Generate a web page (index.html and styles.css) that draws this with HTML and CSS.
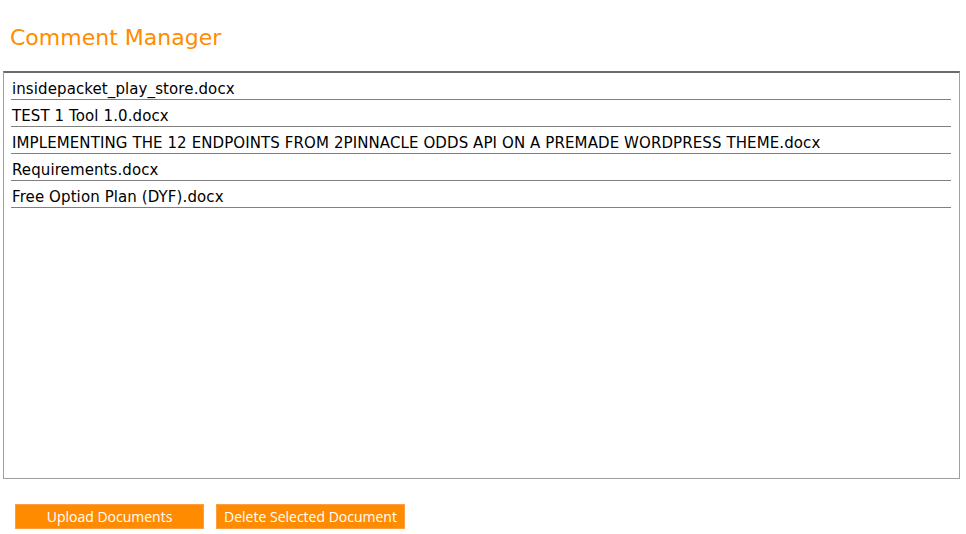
FILE: index.html
```html
<!DOCTYPE html>
<html>
<head>
<meta charset="utf-8">
<link rel="stylesheet" href="styles.css">
</head>
<body>
<h1 class="title">Comment Manager</h1>
<div class="doc-list">
  <div class="doc-row">insidepacket_play_store.docx</div>
  <div class="doc-row">TEST 1 Tool 1.0.docx</div>
  <div class="doc-row">IMPLEMENTING THE 12 ENDPOINTS FROM 2PINNACLE ODDS API ON A PREMADE WORDPRESS THEME.docx</div>
  <div class="doc-row">Requirements.docx</div>
  <div class="doc-row">Free Option Plan (DYF).docx</div>
</div>
<div class="actions">
  <button class="btn">Upload Documents</button>
  <button class="btn">Delete Selected Document</button>
</div>
</body>
</html>
```
FILE: styles.css
```css
html, body {
  margin: 0;
  padding: 0;
  background: #fff;
}
body {
  font-family: "DejaVu Sans", sans-serif;
}
.title {
  margin: 0;
  padding: 23px 0 0 10px;
  height: 49px;
  box-sizing: border-box;
  font-size: 22px;
  font-weight: normal;
  color: #ff8c00;
  line-height: 30px;
}
.doc-list {
  margin-left: 3px;
  width: 957px;
  height: 408px;
  box-sizing: border-box;
  border: 1px solid #a0a0a0;
  border-top: 2px solid #6b6b6b;
  margin-top: 22px;
  display: flex;
  flex-direction: column;
  padding: 0 7px;
}
.doc-row {
  height: 26px;
  border-bottom: 1px solid #808080;
  font-size: 15px;
  letter-spacing: 0.1px;
  line-height: 33px;
  color: #000;
  padding-left: 1px;
  white-space: nowrap;
  margin-right: 1px;
}
.actions {
  display: flex;
  gap: 12px;
  padding: 25px 0 0 15px;
}
.btn {
  width: 189px;
  height: 25px;
  background: #ff8c00;
  border: 1px solid #ffa040;
  box-shadow: inset 0 0 0 1px #ff8c00;
  color: #fff;
  font-family: "Open Sans", sans-serif;
  font-size: 14px;
  padding: 0;
  margin: 0;
}
```
